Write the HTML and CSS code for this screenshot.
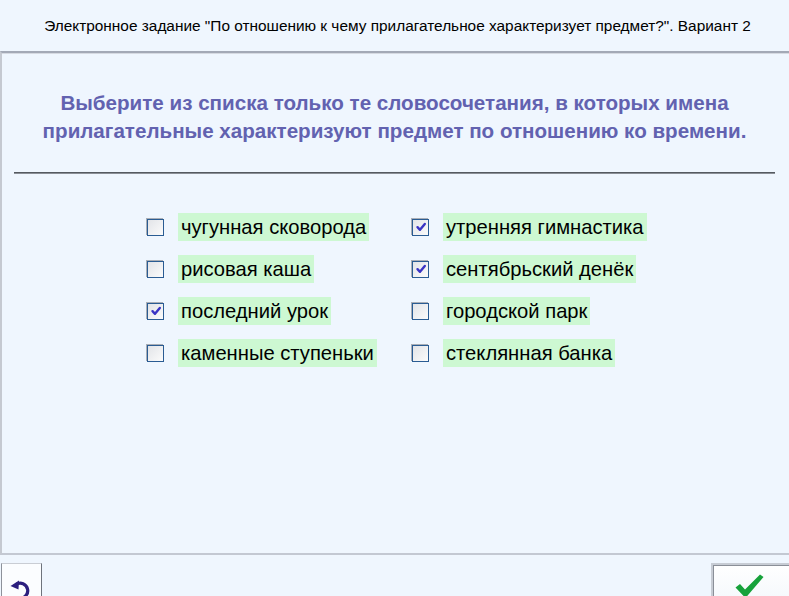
FILE: index.html
```html
<!DOCTYPE html>
<html lang="ru">
<head>
<meta charset="utf-8">
<link rel="stylesheet" href="styles.css">
</head>
<body>
<div class="page">
  <header class="top">Электронное задание "По отношению к чему прилагательное характеризует предмет?". Вариант 2</header>
  <main class="panel">
    <h1 class="question">Выберите из списка только те словосочетания, в которых имена<br>прилагательные характеризуют предмет по отношению ко времени.</h1>
    <hr class="rule">
    <div class="options">
      <label class="opt"><span class="box"></span><span class="txt">чугунная сковорода</span></label>
      <label class="opt"><span class="box checked"><svg viewBox="0 0 12 12"><path d="M2.5 6.2 L5 8.8 L9.8 3" /></svg></span><span class="txt">утренняя гимнастика</span></label>
      <label class="opt"><span class="box"></span><span class="txt">рисовая каша</span></label>
      <label class="opt"><span class="box checked"><svg viewBox="0 0 12 12"><path d="M2.5 6.2 L5 8.8 L9.8 3" /></svg></span><span class="txt">сентябрьский денёк</span></label>
      <label class="opt"><span class="box checked"><svg viewBox="0 0 12 12"><path d="M2.5 6.2 L5 8.8 L9.8 3" /></svg></span><span class="txt">последний урок</span></label>
      <label class="opt"><span class="box"></span><span class="txt">городской парк</span></label>
      <label class="opt"><span class="box"></span><span class="txt">каменные ступеньки</span></label>
      <label class="opt"><span class="box"></span><span class="txt">стеклянная банка</span></label>
    </div>
  </main>
  <footer class="bottom">
    <button class="btn undo" aria-label="Сброс"><svg viewBox="0 0 24 24"><path d="M7 7.5 A7.5 7.5 0 1 1 9.5 21" /><path class="head" d="M1.5 9 L10 3.5 L9.5 12.5 Z" /></svg></button>
    <button class="btn ok" aria-label="Проверить"><svg viewBox="0 0 30 26"><path d="M1.5 14.5 L6 11 L11 16.5 L26 1.5 L29.5 4 L11.5 25 Z" /></svg></button>
  </footer>
</div>
</body>
</html>
```
FILE: styles.css
```css
html, body {
  margin: 0;
  padding: 0;
  background: #eff6fe;
}
body {
  font-family: "Liberation Sans", Arial, sans-serif;
  width: 789px;
  height: 596px;
  overflow: hidden;
}
.page {
  display: flex;
  flex-direction: column;
  height: 596px;
}
.top {
  flex: 0 0 51px;
  display: flex;
  align-items: center;
  justify-content: center;
  font-size: 15.4px;
  color: #000;
  padding-left: 6px;
  box-sizing: border-box;
}
.panel {
  flex: 0 0 504px;
  box-sizing: border-box;
  border-top: 2px solid #a3a9b6;
  border-bottom: 2px solid #c3c8d2;
  border-left: 2px solid #c5c9d1;
  margin-right: -4px;
  box-shadow: inset 0 1px 0 #d6dae2;
  padding: 36px 12px 0 12px;
}
.question {
  margin: 0;
  text-align: center;
  font-size: 20.6px;
  font-weight: bold;
  line-height: 28px;
  color: #6262b0;
  padding-right: 6px;
}
.rule {
  margin: 27px 6px 0 0;
  border: 0;
  height: 1px;
  background: #555a60;
  box-shadow: 0 1px 0 #8a8f96;
}
.options {
  display: grid;
  grid-template-columns: 265px auto;
  row-gap: 14px;
  padding: 40px 0 0 132px;
}
.opt {
  display: flex;
  align-items: center;
  height: 28px;
}
.box {
  width: 17px;
  height: 17px;
  box-sizing: border-box;
  border: 1px solid #2a5c93;
  background: linear-gradient(135deg, #e2e4e8, #fbfbfb);
  box-shadow: -1px -1px 0 #a9aeb6;
  display: flex;
  align-items: center;
  justify-content: center;
  margin: 0 14px 0 1px;
}
.box svg {
  width: 12px;
  height: 12px;
}
.box path {
  fill: none;
  stroke: #3a34c4;
  stroke-width: 2.4;
  stroke-linecap: round;
  stroke-linejoin: round;
}
.txt {
  background: #cdf8d2;
  height: 28px;
  display: flex;
  align-items: center;
  padding: 0 3px 0 3px;
  font-size: 20.2px;
  color: #000;
}
.bottom {
  flex: 1;
  padding-top: 8px;
  display: flex;
  justify-content: space-between;
}
.btn {
  height: 40px;
  margin: 0;
  padding: 0;
  display: flex;
  justify-content: center;
  align-items: flex-start;
}
.undo {
  width: 41px;
  margin-left: 1px;
  background: #fbfdff;
  border: 0;
  border-top: 1px solid #c9cdd4;
  border-left: 1px solid #8d929b;
  border-right: 1px solid #6e737c;
  padding-top: 13px;
  padding-right: 2px;
}
.undo svg {
  width: 24px;
  height: 24px;
}
.undo path {
  fill: none;
  stroke: #2b1f7e;
  stroke-width: 3.2;
}
.undo path.head {
  fill: #2b1f7e;
  stroke: none;
}
.ok {
  width: 80px;
  margin-right: -2px;
  background: linear-gradient(#ffffff, #f4f8fc);
  border: 2px solid #c7ccd4;
  border-right: 0;
  border-bottom: 0;
  box-shadow: inset 1px 1px 0 #8a8f98;
  padding-top: 8px;
  padding-right: 6px;
}
.ok svg {
  width: 30px;
  height: 26px;
}
.ok path {
  fill: #17a23b;
}
```
